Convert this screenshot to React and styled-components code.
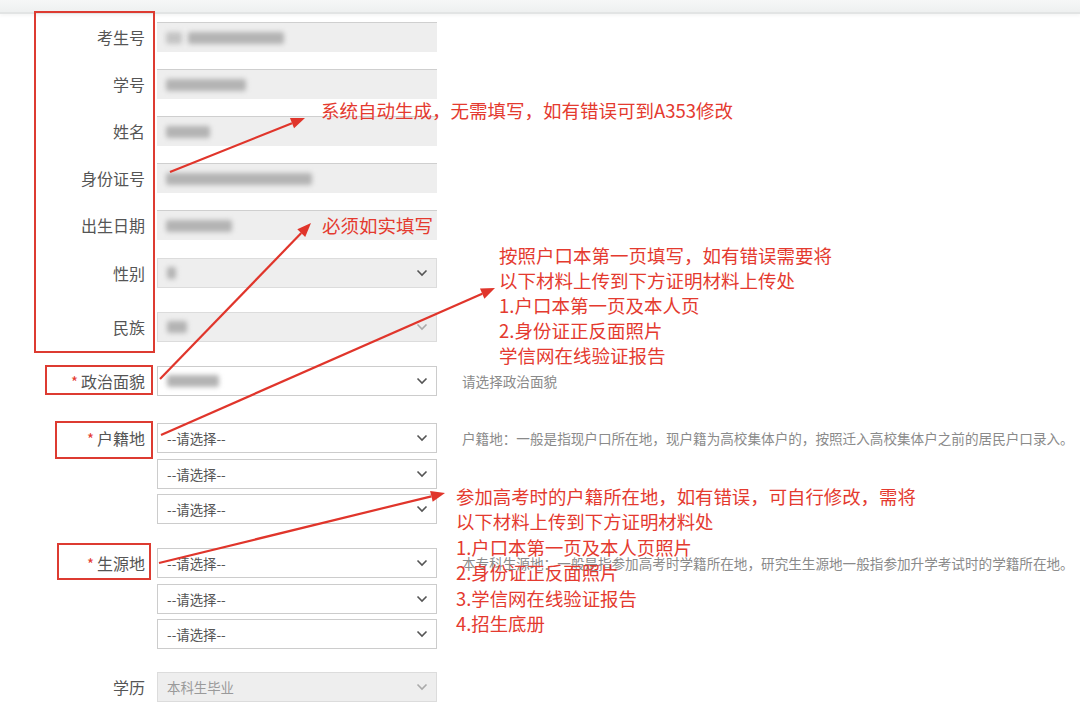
import React from "react";
import styled, { createGlobalStyle } from "styled-components";

const GlobalStyle = createGlobalStyle`
  html, body {
    margin: 0;
    padding: 0;
    background: #ffffff;
  }
  body {
    font-family: "Noto Sans CJK SC", "Noto Sans", sans-serif;
  }
`;

const RED = "#e43a2f";

// Layout
const Page = styled.div`
  position: relative;
  width: 1080px;
  height: 710px;
  overflow: hidden;
  background: #fff;
`;

const TopBar = styled.div`
  height: 12px;
  background: linear-gradient(#f6f7f7, #eef0f0);
  border-bottom: 2px solid #e2e4e4;
  box-shadow: 0 2px 3px rgba(0, 0, 0, 0.04);
`;

const Form = styled.div`
  display: flex;
  flex-direction: column;
  padding-top: 8px;
`;

const Row = styled.div`
  display: flex;
  align-items: flex-start;
  margin-top: ${(p) => p.$gap || 0}px;
`;

const Label = styled.div`
  width: 145px;
  height: 30px;
  line-height: 30px;
  text-align: right;
  font-size: 16px;
  color: #555;
  flex-shrink: 0;
`;

const Star = styled.span`
  color: ${RED};
  font-size: 15px;
  margin-right: 3px;
`;

const Controls = styled.div`
  display: flex;
  flex-direction: column;
  gap: 5.5px;
  margin-left: 12px;
  width: 280px;
  flex-shrink: 0;
`;

const ReadOnly = styled.div`
  height: 30px;
  box-sizing: border-box;
  background: #eeeeee;
  border-top: 1px solid #cfcfcf;
  display: flex;
  align-items: center;
  padding-left: 9px;
`;

const SelectBox = styled.div`
  height: 30px;
  box-sizing: border-box;
  border: 1px solid ${(p) => (p.$disabled ? "#dcdcdc" : "#cccccc")};
  background: ${(p) => (p.$disabled ? "#eeeeee" : "#ffffff")};
  display: flex;
  align-items: center;
  justify-content: space-between;
  padding: 0 8px 0 9px;
  font-size: 13.4px;
  color: ${(p) => (p.$disabled ? "#9a9a9a" : "#555")};
`;

const Blur = styled.span`
  display: inline-block;
  height: 12px;
  width: ${(p) => p.$w}px;
  background: ${(p) => p.$c || "#b3b3b3"};
  filter: blur(2.5px);
  border-radius: 2px;
`;

const Gap = styled.span`
  display: inline-block;
  width: ${(p) => p.$w}px;
`;

const Hint = styled.div`
  margin-left: 25px;
  height: 30px;
  line-height: 30px;
  font-size: 13.6px;
  color: #8a8a8a;
  white-space: nowrap;
`;

// Annotation layer (lies over the form)
const Overlay = styled.div`
  position: absolute;
  inset: 0;
  pointer-events: none;
`;

const Box = styled.div`
  position: absolute;
  box-sizing: border-box;
  border: 2px solid #dd3b31;
`;

const Note = styled.div`
  position: absolute;
  color: ${RED};
  font-size: ${(p) => p.$size || 18.5}px;
  line-height: ${(p) => p.$lh || 25}px;
  white-space: nowrap;
`;

const Arrows = styled.svg`
  position: absolute;
  left: 0;
  top: 0;
`;

const Chevron = ({ light }) => (
  <svg width="12" height="8" viewBox="0 0 12 8">
    <polyline
      points="1.5,1.5 6,6 10.5,1.5"
      fill="none"
      stroke={light ? "#aaa" : "#555"}
      strokeWidth="1.6"
    />
  </svg>
);

const Select = ({ children, disabled, light }) => (
  <SelectBox $disabled={disabled}>
    <span>{children}</span>
    <Chevron light={light} />
  </SelectBox>
);

const Arrow = ({ x1, y1, x2, y2 }) => {
  const a = Math.atan2(y2 - y1, x2 - x1);
  const len = 14;
  const w = 5.5;
  const bx = x2 - len * Math.cos(a);
  const by = y2 - len * Math.sin(a);
  const px = -Math.sin(a) * w;
  const py = Math.cos(a) * w;
  return (
    <g>
      <line x1={x1} y1={y1} x2={bx} y2={by} stroke="#e0352b" strokeWidth="2.2" />
      <polygon
        points={`${x2},${y2} ${bx + px},${by + py} ${bx - px},${by - py}`}
        fill="#e0352b"
      />
    </g>
  );
};

const placeholder = "--请选择--";

export default function App() {
  return (
    <Page>
      <GlobalStyle />
      <TopBar />
      <Form>
        <Row>
          <Label>考生号</Label>
          <Controls>
            <ReadOnly>
              <Blur $w={16} $c="#c4c4c4" />
              <Gap $w={6} />
              <Blur $w={96} />
            </ReadOnly>
          </Controls>
        </Row>
        <Row $gap={17}>
          <Label>学号</Label>
          <Controls>
            <ReadOnly>
              <Blur $w={80} />
            </ReadOnly>
          </Controls>
        </Row>
        <Row $gap={17}>
          <Label>姓名</Label>
          <Controls>
            <ReadOnly>
              <Blur $w={44} />
            </ReadOnly>
          </Controls>
        </Row>
        <Row $gap={17}>
          <Label>身份证号</Label>
          <Controls>
            <ReadOnly>
              <Blur $w={146} />
            </ReadOnly>
          </Controls>
        </Row>
        <Row $gap={17}>
          <Label>出生日期</Label>
          <Controls>
            <ReadOnly>
              <Blur $w={66} />
            </ReadOnly>
          </Controls>
        </Row>
        <Row $gap={18}>
          <Label>性别</Label>
          <Controls>
            <Select disabled>
              <Blur $w={9} />
            </Select>
          </Controls>
        </Row>
        <Row $gap={24}>
          <Label>民族</Label>
          <Controls>
            <Select disabled light>
              <Blur $w={20} />
            </Select>
          </Controls>
        </Row>
        <Row $gap={24}>
          <Label>
            <Star>*</Star>政治面貌
          </Label>
          <Controls>
            <Select>
              <Blur $w={52} />
            </Select>
          </Controls>
          <Hint>请选择政治面貌</Hint>
        </Row>
        <Row $gap={27}>
          <Label>
            <Star>*</Star>户籍地
          </Label>
          <Controls>
            <Select>{placeholder}</Select>
            <Select>{placeholder}</Select>
            <Select>{placeholder}</Select>
          </Controls>
          <Hint>户籍地：一般是指现户口所在地，现户籍为高校集体户的，按照迁入高校集体户之前的居民户口录入。</Hint>
        </Row>
        <Row $gap={24}>
          <Label>
            <Star>*</Star>生源地
          </Label>
          <Controls>
            <Select>{placeholder}</Select>
            <Select>{placeholder}</Select>
            <Select>{placeholder}</Select>
          </Controls>
          <Hint>本专科生源地：一般是指参加高考时学籍所在地，研究生生源地一般指参加升学考试时的学籍所在地。</Hint>
        </Row>
        <Row $gap={23}>
          <Label>学历</Label>
          <Controls>
            <Select disabled light>本科生毕业</Select>
          </Controls>
        </Row>
      </Form>

      <Overlay>
        <Box style={{ left: 34, top: 11, width: 121, height: 342 }} />
        <Box style={{ left: 45, top: 365, width: 108, height: 30 }} />
        <Box style={{ left: 55, top: 421, width: 98, height: 38 }} />
        <Box style={{ left: 57, top: 543, width: 94, height: 37 }} />

        <Arrows width="1080" height="710">
          <Arrow x1={170} y1={172} x2={305} y2={118} />
          <Arrow x1={160} y1={379} x2={311} y2={223} />
          <Arrow x1={161} y1={435} x2={495} y2={288} />
          <Arrow x1={159} y1={563} x2={445} y2={493} />
        </Arrows>

        <Note style={{ left: 321, top: 98 }}>系统自动生成，无需填写，如有错误可到A353修改</Note>
        <Note style={{ left: 322, top: 213 }}>必须如实填写</Note>
        <Note style={{ left: 499, top: 243 }}>
          按照户口本第一页填写，如有错误需要将
          <br />
          以下材料上传到下方证明材料上传处
          <br />
          1.户口本第一页及本人页
          <br />
          2.身份证正反面照片
          <br />
          学信网在线验证报告
        </Note>
        <Note $size={18.4} $lh={25.4} style={{ left: 456, top: 484 }}>
          参加高考时的户籍所在地，如有错误，可自行修改，需将
          <br />
          以下材料上传到下方证明材料处
          <br />
          1.户口本第一页及本人页照片
          <br />
          2.身份证正反面照片
          <br />
          3.学信网在线验证报告
          <br />
          4.招生底册
        </Note>
      </Overlay>
    </Page>
  );
}
